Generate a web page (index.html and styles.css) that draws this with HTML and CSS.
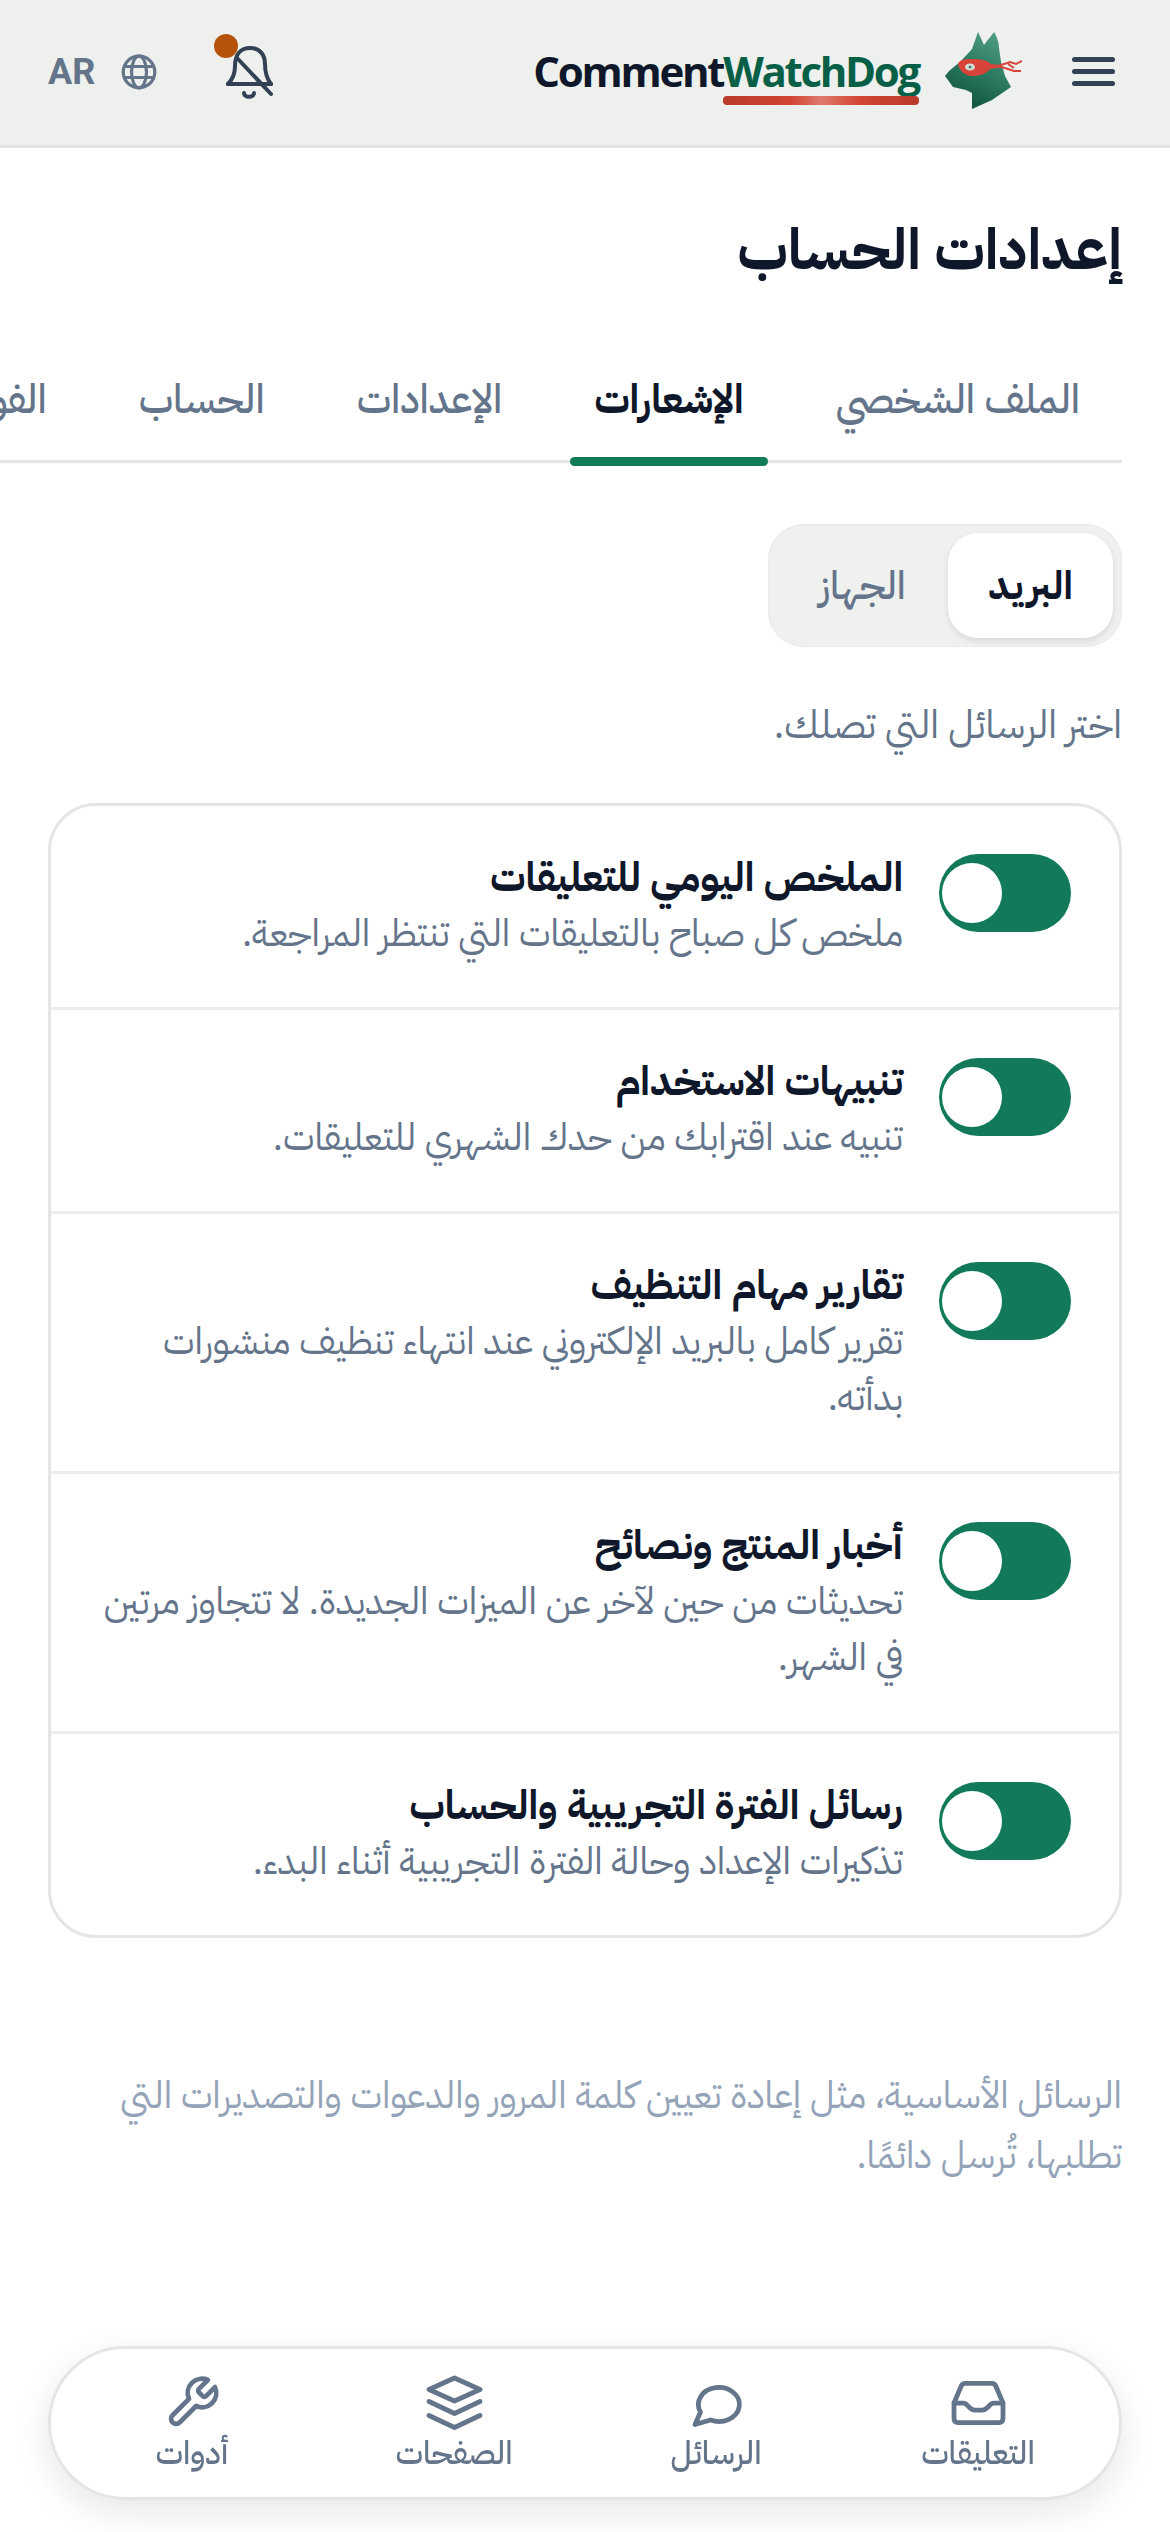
FILE: index.html
```html
<!DOCTYPE html>
<html lang="ar" dir="rtl">
<head>
  <meta charset="UTF-8">
  <meta name="viewport" content="width=device-width, initial-scale=1.0">
  <title>إعدادات الحساب</title>
  <link rel="stylesheet" href="styles.css">
</head>
<body>
  <header class="topbar">
    <button class="icon-btn menu-btn" aria-label="menu">
      <span></span><span></span><span></span>
    </button>
    <svg class="dog" viewBox="0 0 78 78" aria-hidden="true">
      <defs>
        <linearGradient id="dogFill" x1="0.7" y1="0" x2="0.3" y2="1">
          <stop offset="0" stop-color="#4f9c82"/>
          <stop offset="0.5" stop-color="#2a7a60"/>
          <stop offset="1" stop-color="#0f4f3c"/>
        </linearGradient>
      </defs>
      <path fill="url(#dogFill)" d="M28 17 L34 0 L40 13 C43 9 47 4 50 0 C53 5 55 10 55 16 L57 30 L61 44 L67 55 L48 68 L28 77 L28 61 L22 58 L9 55 L1 44 L5 39 L17 29 Z"/>
      <path fill="#d8443a" d="M14 32 C15 28 20 27 28 27 C36 27 43 28 47 32 L56 33 L56 35.500 L46 37 C42 42 35 44 28 44 C21 44 15 38 14 32 Z"/>
      <path fill="none" stroke="#d8443a" stroke-width="2" d="M54 34 L66 30 L72 32 L78 29 M54 34 L64 37 L70 39 L77 39 M64 32 L70 36"/>
      <ellipse cx="26" cy="35" rx="5" ry="3.500" fill="#d3ded6"/>
      <circle cx="26" cy="35" r="1.500" fill="#4d7a68"/>
    </svg>
    <a class="brand">
      <span class="brand-a">Comment</span><span class="brand-b">WatchDog</span>
    </a>
    <div class="topbar-spacer"></div>
    <button class="icon-btn bell-btn" aria-label="notifications">
      <span class="bell-dot"></span>
      <svg viewBox="0 0 48 54" fill="none" stroke="#334155" stroke-width="4" stroke-linecap="round" stroke-linejoin="round">
        <path d="M3 38 H46"/>
        <path d="M3 38 C8 33 10 27 10 20 C10 9 15 2 25 2 C35 2 40 9 40 18 C40 27 42 33 46 38"/>
        <path d="M12 12 L46 48"/>
        <path d="M19 47 C19 52 29 52 29 47"/>
      </svg>
    </button>
    <div class="lang">
      <svg viewBox="0 0 36 36" fill="none" stroke="#64748b" stroke-width="3.200">
        <circle cx="18" cy="18" r="15.800"/>
        <ellipse cx="18" cy="18" rx="7.500" ry="15.800"/>
        <path d="M3 12.500 H33 M3 23.500 H33"/>
      </svg>
      <span>AR</span>
    </div>
  </header>

  <main class="page">
    <h1 class="page-title">إعدادات الحساب</h1>

    <nav class="tabs">
      <a class="tab">الملف الشخصي</a>
      <a class="tab active">الإشعارات</a>
      <a class="tab">الإعدادات</a>
      <a class="tab">الحساب</a>
      <a class="tab">الفواتير</a>
    </nav>

    <div class="segment">
      <button class="segment-item active">البريد</button>
      <button class="segment-item">الجهاز</button>
    </div>

    <p class="hint">اختر الرسائل التي تصلك.</p>

    <section class="card">
      <div class="row">
        <span class="toggle"><span class="knob"></span></span>
        <div class="row-text">
          <h3>الملخص اليومي للتعليقات</h3>
          <p>ملخص كل صباح بالتعليقات التي تنتظر المراجعة.</p>
        </div>
      </div>
      <div class="row">
        <span class="toggle"><span class="knob"></span></span>
        <div class="row-text">
          <h3>تنبيهات الاستخدام</h3>
          <p>تنبيه عند اقترابك من حدك الشهري للتعليقات.</p>
        </div>
      </div>
      <div class="row">
        <span class="toggle"><span class="knob"></span></span>
        <div class="row-text">
          <h3>تقارير مهام التنظيف</h3>
          <p>تقرير كامل بالبريد الإلكتروني عند انتهاء تنظيف منشورات بدأته.</p>
        </div>
      </div>
      <div class="row">
        <span class="toggle"><span class="knob"></span></span>
        <div class="row-text">
          <h3>أخبار المنتج ونصائح</h3>
          <p>تحديثات من حين لآخر عن الميزات الجديدة. لا تتجاوز مرتين في الشهر.</p>
        </div>
      </div>
      <div class="row">
        <span class="toggle"><span class="knob"></span></span>
        <div class="row-text">
          <h3>رسائل الفترة التجريبية والحساب</h3>
          <p>تذكيرات الإعداد وحالة الفترة التجريبية أثناء البدء.</p>
        </div>
      </div>
    </section>

    <p class="footnote">الرسائل الأساسية، مثل إعادة تعيين كلمة المرور والدعوات والتصديرات التي تطلبها، تُرسل دائمًا.</p>
  </main>

  <nav class="bottom-nav">
    <a class="nav-item">
      <svg viewBox="0 0 57 57">
        <path d="M4 29 L11 12.500 C12 10 13.500 9.400 15 9.400 H42 C43.500 9.400 45 10 46 12.500 L53 29 V44 C53 47 51.500 48.600 49 48.600 H8 C5.500 48.600 4 47 4 44 Z"/>
        <path d="M4 29 H13 C15 29 16 29.500 17 31 L20 34 C21.500 35.500 23 36 25 36 H32 C34 36 35.500 35.500 37 34 L40 31 C41 29.500 42 29 44 29 H53"/>
      </svg>
      <span>التعليقات</span>
    </a>
    <a class="nav-item">
      <svg viewBox="0 0 57 57">
        <path d="M7 50.500 L12.500 38 A20.500 17 0 1 1 22.500 46 Z"/>
      </svg>
      <span>الرسائل</span>
    </a>
    <a class="nav-item">
      <svg viewBox="0 0 57 57">
        <path d="M28.500 4 L54 15.500 L28.500 27 L3 15.500 Z"/>
        <path d="M3 27.500 L28.500 39.500 L54 27.500"/>
        <path d="M3 41.500 L28.500 53.500 L54 41.500"/>
      </svg>
      <span>الصفحات</span>
    </a>
    <a class="nav-item">
      <svg viewBox="0 0 24 24" class="thin">
        <path d="M14.700 6.300a1 1 0 0 0 0 1.400l1.600 1.600a1 1 0 0 0 1.400 0l3.770-3.770a6 6 0 0 1-7.940 7.940l-6.910 6.910a2.120 2.120 0 0 1-3-3l6.910-6.910a6 6 0 0 1 7.940-7.940l-3.760 3.760z"/>
      </svg>
      <span>أدوات</span>
    </a>
  </nav>
</body>
</html>
```

FILE: styles.css
```css
* {
  box-sizing: border-box;
}

html, body {
  margin: 0;
  background-color: #fff;
}

body {
  font-family: "IBM Plex Sans Arabic", "Noto Sans Arabic", "Noto Sans", "DejaVu Sans", sans-serif;
  color: #0f172a;
  height: 2532px;
  overflow: hidden;
}

p, h1, h3 {
  margin: 0;
}

button {
  border: none;
  background: none;
  padding: 0;
  font: inherit;
}

/* top bar */
.topbar {
  display: flex;
  align-items: center;
  height: 148px;
  padding: 0 55px 3px 48px;
  background-color: #edf0ec;
  border-bottom: 3px solid #e4e6e3;
}

.menu-btn {
  display: flex;
  flex-direction: column;
  gap: 7px;
  width: 43px;
}

.menu-btn span {
  display: block;
  height: 5px;
  border-radius: 3px;
  background-color: #334155;
}

.dog {
  width: 78px;
  height: 78px;
  margin-right: 50px;
  margin-left: 25px;
}

.brand {
  direction: ltr;
  position: relative;
  font-family: "Open Sans", sans-serif;
  font-weight: 700;
  font-size: 42px;
  letter-spacing: -2.300px;
  line-height: 1;
}

.brand-a {
  color: #0f172a;
}

.brand-b {
  position: relative;
  color: #065f46;
}

.brand-b::after {
  content: "";
  position: absolute;
  left: 0;
  right: 0;
  bottom: -6px;
  height: 9px;
  border-radius: 4px;
  background: linear-gradient(90deg, #b93a2b, #d24534 35%, #e07a6e 50%, #d24534 70%, #b93a2b);
}

.topbar-spacer {
  flex: 1;
}

.bell-btn {
  position: relative;
  width: 48px;
  height: 54px;
  margin-left: 68px;
  margin-top: 4px;
}

.bell-btn svg {
  display: block;
  width: 48px;
  height: 54px;
}

.bell-dot {
  position: absolute;
  top: -12px;
  left: -11px;
  width: 24px;
  height: 24px;
  border-radius: 50%;
  background-color: #b45309;
}

.lang {
  display: flex;
  align-items: center;
  gap: 26px;
  color: #64748b;
  font-family: "Roboto", sans-serif;
  font-weight: 700;
  font-size: 36px;
  margin-top: 2px;
}

.lang svg {
  width: 36px;
  height: 36px;
}

/* page content */
.page {
  padding: 0 48px;
}

.page-title {
  font-size: 57px;
  font-weight: 700;
  line-height: 72px;
  padding-top: 66px;
  box-sizing: content-box;
}

.tabs {
  display: flex;
  gap: 44px;
  margin: 84px 0 0 -48px;
  padding-right: 18px;
  height: 96px;
  white-space: nowrap;
  overflow: hidden;
  background: linear-gradient(#e4e6e3, #e4e6e3) left bottom 3px / 100% 3px no-repeat;
}

.tab {
  position: relative;
  padding: 0 24px;
  font-size: 40px;
  line-height: 60px;
  font-weight: 500;
  color: #64748b;
}

.tab.active {
  color: #0f172a;
  font-weight: 700;
}

.tab.active::after {
  content: "";
  position: absolute;
  left: 0;
  right: 0;
  bottom: 0;
  height: 9px;
  border-radius: 5px;
  background-color: #107a59;
}

.segment {
  display: inline-flex;
  gap: 0;
  margin-top: 58px;
  padding: 9px;
  border-radius: 36px;
  background-color: #eef1ed;
  box-shadow: inset 0 0 0 1px #e9ebe8;
}

.segment-item {
  width: 171px;
  height: 105px;
  border-radius: 30px;
  font-size: 39px;
  font-weight: 500;
  color: #64748b;
}

.segment-item.active {
  width: 165px;
  color: #0f172a;
  font-weight: 700;
  background-color: #fff;
  box-shadow: 0 3px 6px rgba(15, 23, 42, 0.1);
}

.hint {
  margin-top: 48px;
  font-size: 39px;
  line-height: 60px;
  color: #64748b;
}

.card {
  margin-top: 48px;
  border: 3px solid #e4e6e3;
  border-radius: 48px;
  overflow: hidden;
}

.row {
  display: flex;
  align-items: flex-start;
  gap: 36px;
  padding: 45px 48px 45px;
  border-bottom: 3px solid #eceeeb;
}

.row:last-child {
  border-bottom: none;
}

.toggle {
  flex: none;
  display: flex;
  justify-content: flex-end;
  align-items: center;
  width: 132px;
  height: 78px;
  padding: 0 3px;
  border-radius: 39px;
  background-color: #127a5a;
  margin-top: 3px;
}

.knob {
  width: 60px;
  height: 60px;
  border-radius: 50%;
  background-color: #fff;
}

.row-text h3 {
  font-size: 40px;
  font-weight: 700;
  line-height: 54px;
}

.row-text p {
  margin-top: 1px;
  font-size: 37.500px;
  line-height: 56px;
  color: #64748b;
}

.footnote {
  margin-top: 128px;
  font-size: 37.500px;
  line-height: 60px;
  color: #94a3b8;
}

/* bottom navigation */
.bottom-nav {
  position: fixed;
  left: 48px;
  right: 48px;
  bottom: 32px;
  height: 154px;
  display: grid;
  grid-template-columns: repeat(4, 1fr);
  align-items: start;
  padding: 25px 10px 0;
  background-color: #fff;
  border: 3px solid #e4e6e3;
  border-radius: 77px;
  box-shadow: 0 12px 36px rgba(15, 23, 42, 0.1);
}

.nav-item {
  display: flex;
  flex-direction: column;
  align-items: center;
  font-size: 32px;
  line-height: 44px;
  font-weight: 500;
  color: #64748b;
}

.nav-item svg {
  width: 57px;
  height: 57px;
  fill: none;
  stroke: #64748b;
  stroke-width: 4.750px;
  stroke-linecap: round;
  stroke-linejoin: round;
}

.nav-item svg.thin {
  stroke-width: 2px;
}
```
